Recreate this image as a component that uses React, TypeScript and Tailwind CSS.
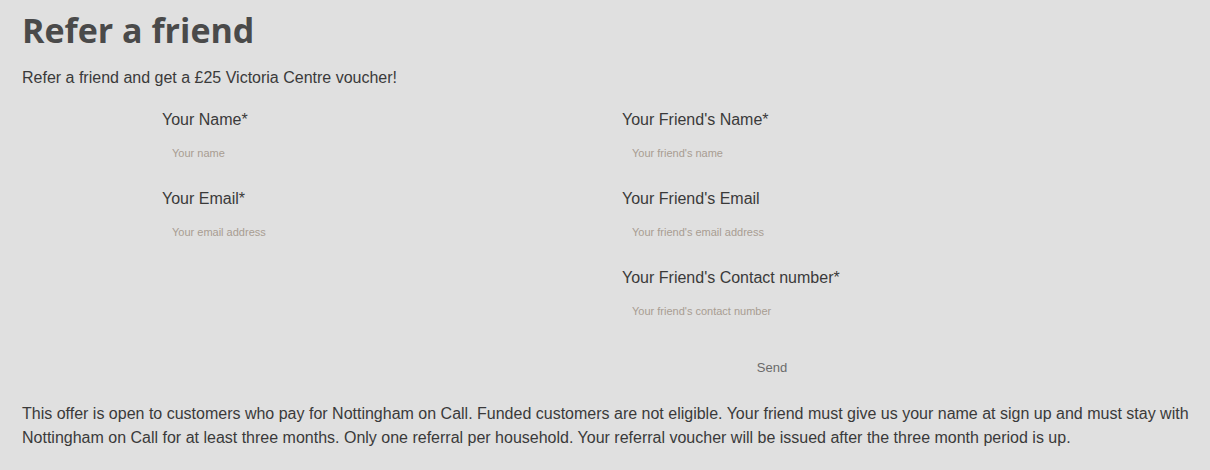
import { useState } from 'react';

type Field = { label: string; placeholder: string };

const left: Field[] = [
  { label: 'Your Name*', placeholder: 'Your name' },
  { label: 'Your Email*', placeholder: 'Your email address' },
];

const right: Field[] = [
  { label: "Your Friend's Name*", placeholder: "Your friend's name" },
  { label: "Your Friend's Email", placeholder: "Your friend's email address" },
  { label: "Your Friend's Contact number*", placeholder: "Your friend's contact number" },
];

function FormField({ field }: { field: Field }) {
  const [value, setValue] = useState('');
  return (
    <div className="mb-[18px] flex flex-col">
      <label className="text-[16px] leading-[20px] text-[#3a3a3a]">{field.label}</label>
      <input
        className="mt-[4px] h-[37px] w-[300px] bg-transparent px-[10px] text-[11px] text-[#3a3a3a] outline-none placeholder:text-[#a89d92]"
        type="text"
        value={value}
        onChange={(e) => setValue(e.target.value)}
        placeholder={field.placeholder}
      />
    </div>
  );
}

export default function App() {
  return (
    <div className="min-h-[470px] bg-[#e0e0e0] pl-[22px] pr-[4px] font-['Liberation_Sans',Arial,sans-serif]">
      <h1 className="pt-[8px] font-['Open_Sans',sans-serif] text-[34px] font-bold leading-[44px] text-[#4a4a4a]">
        Refer a friend
      </h1>
      <p className="mt-[14px] text-[16px] leading-[24px] text-[#3a3a3a]">
        Refer a friend and get a £25 Victoria Centre voucher!
      </p>

      <form className="ml-[140px] mt-[20px] flex" onSubmit={(e) => e.preventDefault()}>
        <div className="w-[460px]">
          {left.map((f) => (
            <FormField key={f.label} field={f} />
          ))}
        </div>
        <div className="w-[460px]">
          {right.map((f) => (
            <FormField key={f.label} field={f} />
          ))}
          <button
            type="submit"
            className="h-[42px] w-[300px] text-center text-[13px] text-[#6b6b6b]"
          >
            Send
          </button>
        </div>
      </form>

      <p className="mt-[13px] text-[16px] leading-[24px] text-[#3a3a3a]">
        This offer is open to customers who pay for Nottingham on Call. Funded customers are not
        eligible. Your friend must give us your name at sign up and must stay with Nottingham on
        Call for at least three months. Only one referral per household. Your referral voucher will
        be issued after the three month period is up.
      </p>
    </div>
  );
}
